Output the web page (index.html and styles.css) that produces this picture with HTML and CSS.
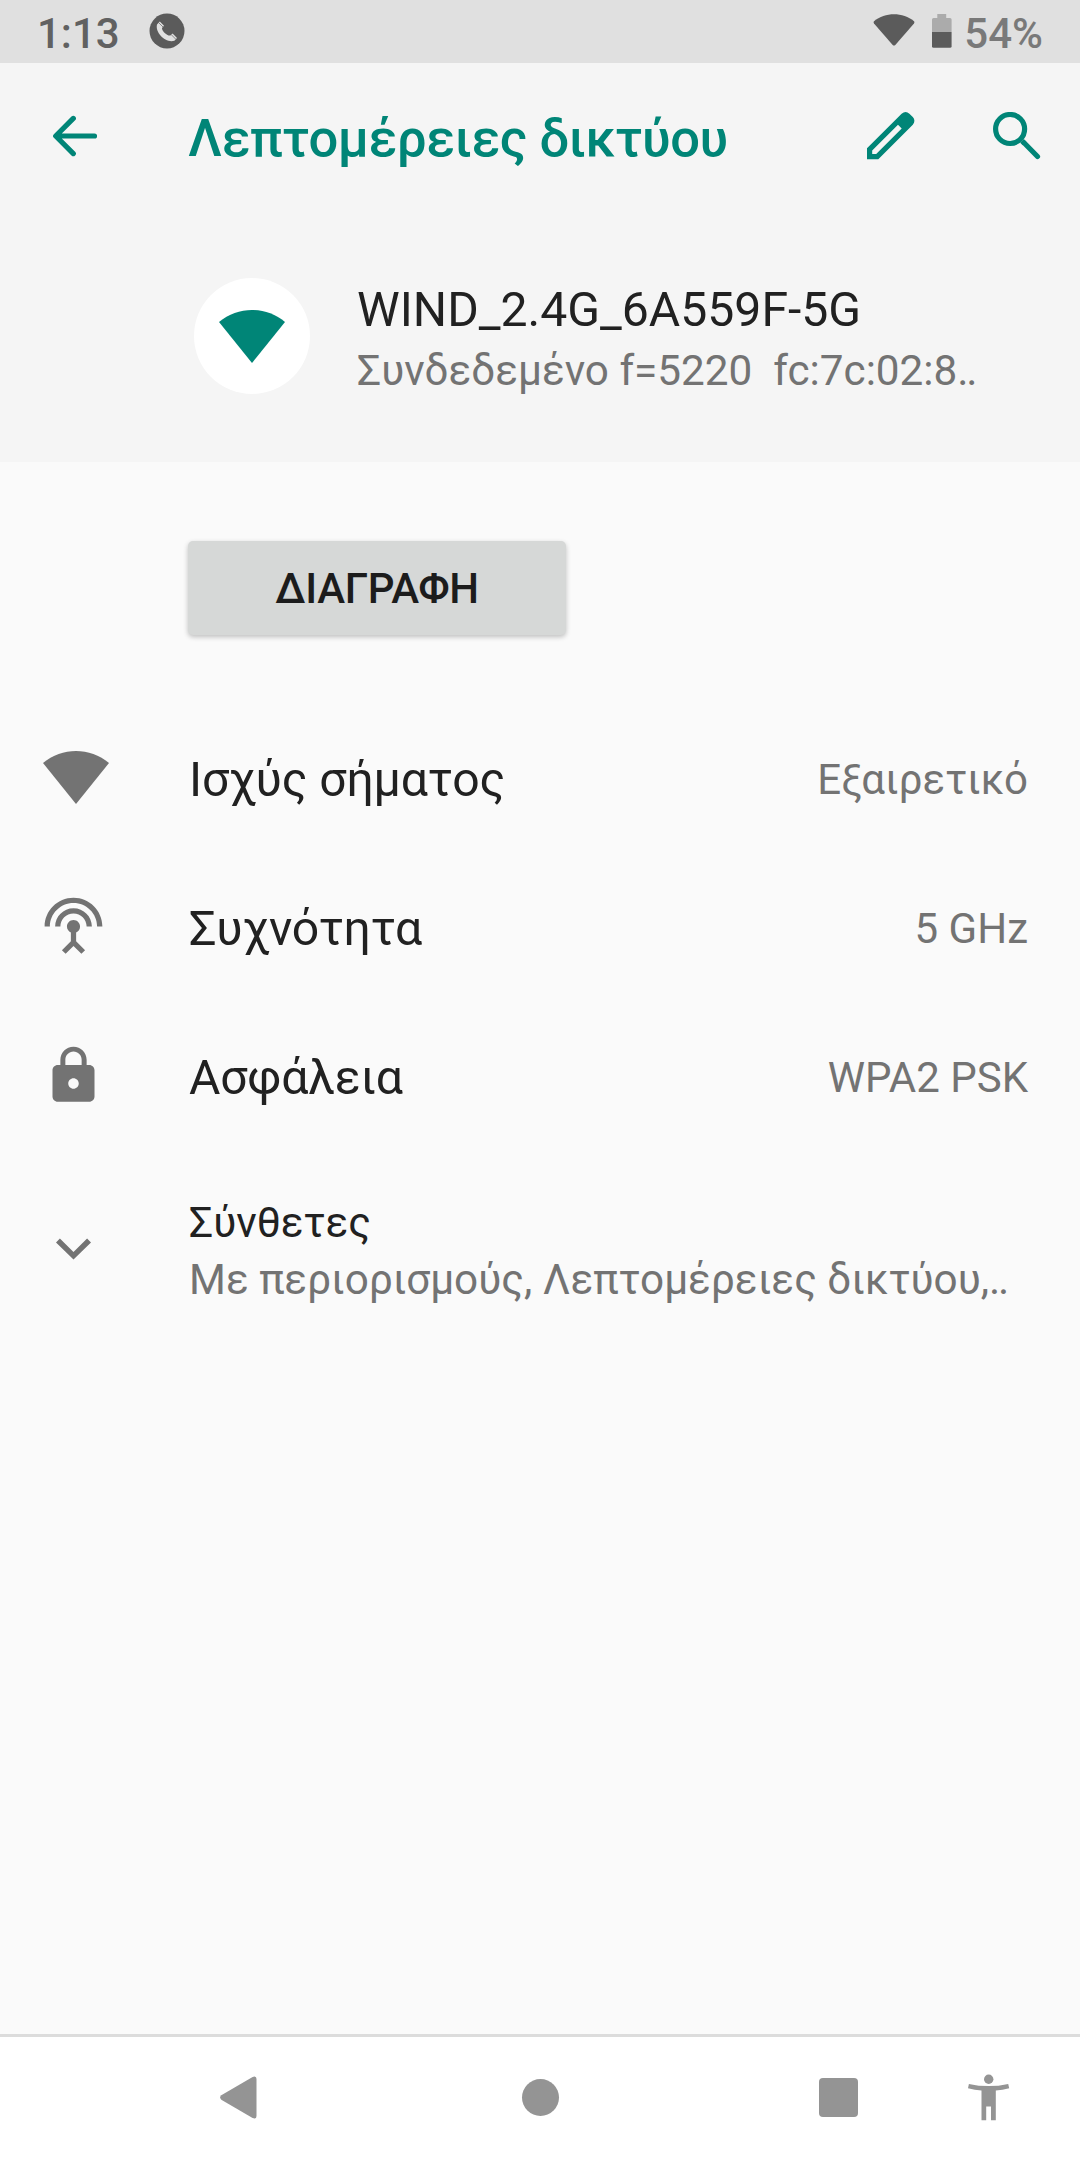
FILE: index.html
```html
<!DOCTYPE html>
<html lang="el">
<head>
<meta charset="utf-8">
<title>Λεπτομέρειες δικτύου</title>
<link rel="stylesheet" href="styles.css">
</head>
<body>
<div class="screen">
  <div class="status-bar">
    <span class="clock">1:13</span>
    <svg class="call-icon" width="36" height="36" viewBox="0 0 36 36"><circle cx="18" cy="18" r="17.5" fill="#5b5b5b"/><path d="M8 11.5L10.8 8.6L15 12.8L13 15C12.6 17.6 17.6 23 21.4 22.6L23.6 20.6L28 25L25.4 27.8C16.4 30.4 6 19.6 8 11.5Z" fill="#e0e0e0"/><path d="M9.6 9.6l4.8 4.8M22.4 21.8l4.8 4.8" stroke="#5b5b5b" stroke-width=".7"/></svg>
    <span class="spacer"></span>
    <svg class="status-wifi" width="42" height="32" viewBox="0 0 42 32"><path d="M1 7.2C12 -2 30 -2 41 7.2Q41.8 8.2 41 9.4L22.3 31Q21 32 19.7 31L1 9.4Q.2 8.2 1 7.2Z" fill="#5b5b5b"/></svg>
    <svg class="battery" width="20" height="34" viewBox="0 0 20 34"><path d="M5.3 0H14.2V4H18Q19.6 4 19.6 5.6V18H0V5.6Q0 4 1.6 4H5.3Z" fill="#ababab"/><path d="M0 18H19.6V32.2Q19.6 33.8 18 33.8H1.6Q0 33.8 0 32.2Z" fill="#5b5b5b"/></svg>
    <span class="percent">54%</span>
  </div>
  <header class="header">
    <div class="app-bar">
      <svg class="back" width="46" height="42" viewBox="0 0 46 42" fill="none" stroke="#008577" stroke-width="5.2" stroke-linecap="round" stroke-linejoin="round"><path d="M42.5 21H4.5M21.3 3.4L3.7 21L21.3 38.6"/></svg>
      <h1 class="title">Λεπτομέρειες δικτύου</h1>
      <svg class="edit" width="48" height="48" viewBox="0 0 48 48"><path fill="#008577" fill-rule="evenodd" d="M0 47.3V36.2L34.6 1.7Q38.7-1.7 42.4 1.7L45.8 5.1Q49 8.8 45.8 12.7L11.3 47.3ZM5.2 42.1H9.2L34.7 16.4L31 12.7L5.2 38.4Z"/></svg>
      <svg class="search" width="48" height="48" viewBox="0 0 48 48" fill="none" stroke="#008577" stroke-width="5.2"><circle cx="17.1" cy="17" r="14.5"/><path d="M29 28.8L31.5 31.3"/><path d="M31.5 31.3L44.5 44.5" stroke-linecap="round"/></svg>
    </div>
    <div class="network">
      <div class="badge"><svg width="66" height="53" viewBox="0 0 66 53"><path d="M0 12C19-4 47-4 66 12L33 53Z" fill="#008577"/></svg></div>
      <div class="network-text">
        <div class="label">WIND_2.4G_6A559F-5G</div>
        <div class="sub network-state">Συνδεδεμένο f=5220&nbsp; fc:7c:02:8‥</div>
      </div>
    </div>
  </header>
  <main class="content">
    <button class="forget">ΔΙΑΓΡΑΦΗ</button>
    <div class="row">
      <div class="row-icon signal"><svg width="66" height="53" viewBox="0 0 66 53"><path d="M0 12C19-4 47-4 66 12L33 53Z" fill="#737373"/></svg></div>
      <span class="label">Ισχύς σήματος</span><span class="value">Εξαιρετικό</span>
    </div>
    <div class="row">
      <div class="row-icon"><svg width="63" height="63" viewBox="0 0 24 24"><path fill="#737373" d="M12 5c-3.87 0-7 3.13-7 7h2c0-2.76 2.24-5 5-5s5 2.24 5 5h2c0-3.87-3.13-7-7-7zm1 9.29c.88-.39 1.5-1.26 1.5-2.29 0-1.38-1.12-2.5-2.5-2.5S9.5 10.62 9.5 12c0 1.02.62 1.9 1.5 2.29v3.3L7.59 21 9 22.41l3-3 3 3L16.41 21 13 17.59v-3.3zM12 1C5.93 1 1 5.93 1 12h2c0-4.97 4.03-9 9-9s9 4.03 9 9h2c0-6.07-4.93-11-11-11z"/></svg></div>
      <span class="label">Συχνότητα</span><span class="value">5 GHz</span>
    </div>
    <div class="row">
      <div class="row-icon"><svg width="63" height="63" viewBox="0 0 24 24"><path fill="#737373" d="M18 8h-1V6c0-2.76-2.24-5-5-5S7 3.24 7 6v2H6c-1.1 0-2 .9-2 2v10c0 1.1.9 2 2 2h12c1.1 0 2-.9 2-2V10c0-1.1-.9-2-2-2zm-6 9c-1.1 0-2-.9-2-2s.9-2 2-2 2 .9 2 2-.9 2-2 2zm3.1-9H8.9V6c0-1.71 1.39-3.1 3.1-3.1 1.71 0 3.1 1.39 3.1 3.1v2z"/></svg></div>
      <span class="label">Ασφάλεια</span><span class="value">WPA2 PSK</span>
    </div>
    <div class="row advanced">
      <div class="row-icon"><svg width="63" height="63" viewBox="0 0 63 63"><path fill="#737373" d="M14 22.4L17.9 18.5L31.5 32.1L45.1 18.5L49 22.4L31.5 39.6Z"/></svg></div>
      <div>
        <div class="sub strong">Σύνθετες</div>
        <div class="sub">Με περιορισμούς, Λεπτομέρειες δικτύου,‥</div>
      </div>
    </div>
  </main>
  <nav class="nav-bar">
    <svg class="nav-back" width="37" height="43" viewBox="0 0 37 43"><path d="M1.3 19.3L32.6 .9Q36.5-.6 36.5 3V40Q36.5 43.6 32.6 42.1L1.3 23.7Q-1 21.5 1.3 19.3Z" fill="#949494"/></svg>
    <span class="nav-home"></span>
    <span class="nav-recents"></span>
    <svg class="nav-access" width="42" height="48" viewBox="0 0 42 48" fill="#949494"><circle cx="20.7" cy="5.2" r="4.7"/><path d="M.9 9.9Q20.7 14.3 40.2 9.9L41.2 14.2Q34.5 16 27.8 16.6V46.3H23V32.6H18.2V46.3H13.5V16.6Q6.8 16 0 14.2Z"/></svg>
  </nav>
</div>
</body>
</html>
```
FILE: styles.css
```css
* { box-sizing: border-box; }
body { margin: 0; font-family: Roboto, "Noto Sans", sans-serif; }
svg { display: block; flex: none; }
.screen { width: 1080px; height: 2160px; display: flex; flex-direction: column; background: #fafafa; color: #212121; overflow: hidden; }
.status-bar { height: 63px; flex: none; display: flex; align-items: flex-start; background: #e0e0e0; padding: 0 37px 0 37px; font-size: 42px; font-weight: 500; line-height: 50px; }
.clock { width: 112px; padding-top: 9px; color: #616161; white-space: nowrap; }
.call-icon { margin-top: 13px; }
.spacer { flex: 1; }
.status-wifi { margin: 14px 17px 0 0; }
.battery { margin: 14px 12px 0 0; }
.percent { padding-top: 9px; color: #797979; white-space: nowrap; }
.header { height: 399px; flex: none; background: #f5f5f5; }
.app-bar { height: 147px; display: flex; align-items: center; padding: 0 39px 1px 52px; }
.title { flex: 1; margin: 0 0 0 90px; padding-top: 3px; font-size: 52.5px; line-height: 62px; font-weight: 500; letter-spacing: -.48px; color: #008577; white-space: nowrap; }
.edit { margin-right: 78px; }
.network { display: flex; padding: 68px 0 0 194px; }
.badge { width: 116px; height: 116px; flex: none; border-radius: 50%; background: #fff; display: flex; align-items: center; justify-content: center; }
.network-text { padding: 3px 0 0 47px; }
.label { font-size: 48.15px; line-height: 57px; white-space: nowrap; }
.sub { font-size: 42.26px; line-height: 57px; color: #737373; white-space: nowrap; }
.network-state { padding-top: 4px; }
.content { flex: 1; display: flex; flex-direction: column; }
.forget { width: 378px; height: 94px; margin: 79px 0 68px 188px; padding: 2px 0 0; border: 0; border-radius: 5px; background: #d6d8d7; box-shadow: 0 2px 5px rgba(0,0,0,.24); font: 500 42px/92px Roboto, "Noto Sans", sans-serif; letter-spacing: -.3px; color: #1c1c1c; }
.row { height: 149px; display: flex; align-items: center; padding: 0 52px 0 42px; }
.row-icon { width: 147px; flex: none; }
.signal { padding-left: 1px; }
.row .label { flex: 1; padding-top: 4px; letter-spacing: -.15px; }
.value { padding-top: 4px; font-size: 42px; line-height: 50px; color: #737373; white-space: nowrap; }
.advanced { height: 202px; }
.strong { color: #212121; }
.nav-bar { height: 126px; flex: none; display: flex; align-items: center; border-top: 3px solid #dcdcdc; background: #fff; padding: 0 70px 2px 220px; }
.nav-home { width: 37px; height: 37px; margin-left: 265px; border-radius: 50%; background: #949494; }
.nav-recents { width: 39px; height: 39px; margin-left: 260px; border-radius: 4px; background: #949494; }
.nav-access { margin-left: 110px; }
```
